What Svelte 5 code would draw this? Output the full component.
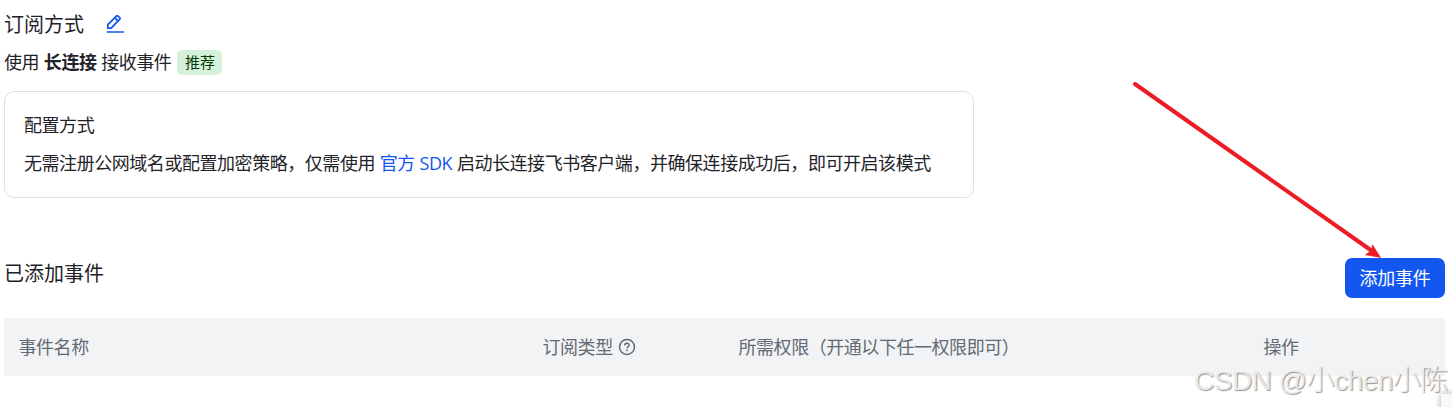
<script>
  const columns = [
    { label: '事件名称' },
    { label: '订阅类型', help: true },
    { label: '所需权限（开通以下任一权限即可）' },
    { label: '操作' }
  ];
</script>

<main>
  <header class="title">
    <h2>订阅方式</h2>
    <svg class="edit" width="20" height="20" viewBox="0 0 20 20" fill="none" stroke="#1456f0" stroke-width="1.8" stroke-linejoin="round" stroke-linecap="round">
      <path d="M2.800 14.200v-3.500l8.800-8.800q.6-.5 1.200 0l2 2q.5.6 0 1.200L6.200 14.200Z" />
      <path d="M10.400 4.400l2.400 2.400" />
      <path d="M2.400 17.900h15.900" stroke-width="1.5" />
    </svg>
  </header>

  <p class="mode"><span>使用 <b>长连接</b> 接收事件</span><span class="tag">推荐</span></p>

  <section class="card">
    <p>配置方式</p>
    <p>无需注册公网域名或配置加密策略，仅需使用 <a href="#sdk">官方 SDK</a> 启动长连接飞书客户端，并确保连接成功后，即可开启该模式</p>
  </section>

  <section class="events">
    <h2>已添加事件</h2>
    <button>添加事件</button>
  </section>

  <div class="table-head">
    {#each columns as col}
      <div class="cell">
        <span>{col.label}</span>
        {#if col.help}
          <svg width="18" height="18" viewBox="0 0 18 18" fill="none" stroke="#646a73" stroke-width="1.5">
            <circle cx="9" cy="9" r="7.500" />
            <path d="M6.800 7.400C6.800 4.500 11.200 4.600 11.200 7.200C11.200 8.800 9 8.700 9 10.600" />
            <path d="M9 11.600v1.600" />
          </svg>
        {/if}
      </div>
    {/each}
  </div>

  <svg class="arrow" width="260" height="190" viewBox="1130 75 260 190">
    <path d="M1135 84L1372 251" stroke="#ed1c24" stroke-width="4" stroke-linecap="round" />
    <path d="M1380.500 257.500L1372.500 244.800L1371.500 250.500L1365.500 254.800Z" fill="#ed1c24" stroke="#ed1c24" stroke-width=".6" />
  </svg>
  <div class="corner"></div>
  <div class="watermark">CSDN @小chen小陈</div>
</main>

<style>
  :global(body) { background: #fff; }
  main {
    position: relative;
    box-sizing: border-box;
    width: 1452px;
    height: 407px;
    padding: 10px 7px 0 4px;
    overflow: hidden;
    color: #1f2329;
    font-family: "Open Sans", "Noto Sans CJK SC", sans-serif;
    font-size: 18px;
    letter-spacing: -.45px;
    word-spacing: .5px;
    line-height: 28px;
  }
  h2, p { margin: 0; font-weight: 400; }
  h2 { font-size: 20px; line-height: 30px; letter-spacing: 0; }
  .title { display: flex; align-items: center; height: 28px; gap: 21px; }
  .title h2 { padding-top: 2px; }
  .mode { display: flex; align-items: center; gap: 6px; height: 28px; margin-top: 10px; }
  b { font-weight: 700; }
  .tag {
    box-sizing: border-box;
    width: 45px;
    height: 25px;
    border-radius: 5px;
    background: #d5f1dc;
    color: #043b00;
    font-size: 15px;
    letter-spacing: 0;
    line-height: 24px;
    text-align: center;
  }
  .card {
    box-sizing: border-box;
    width: 970px;
    height: 107px;
    margin-top: 15px;
    padding: 19px;
    border: 1px solid #dee0e3;
    border-radius: 10px;
    white-space: nowrap;
  }
  .card p + p { margin-top: 10px; }
  a { color: #1456f0; text-decoration: none; }
  .events {
    display: flex;
    justify-content: space-between;
    height: 40px;
    margin-top: 60px;
  }
  .events h2 { padding-top: 1px; }
  button {
    width: 100px;
    height: 40px;
    padding: 0;
    border: 0;
    border-radius: 7px;
    background: #1456f0;
    color: #fff;
    font: inherit;
    letter-spacing: -.3px;
  }
  .table-head {
    display: grid;
    grid-template-columns: 524px 196px 525px 1fr;
    height: 58px;
    margin-top: 20px;
    background: #f1f3f5;
    color: #646a73;
  }
  .cell { display: flex; align-items: center; gap: 5px; padding-left: 14.500px; white-space: nowrap; }
  .cell span { margin-top: -1px; }
  .arrow { position: absolute; left: 1130px; top: 75px; }
  .corner {
    position: absolute;
    left: 1441px;
    top: 394px;
    width: 20px;
    height: 20px;
    background: #f8f8f8;
    box-shadow: 0 0 7px rgba(0, 0, 0, .35);
  }
  .watermark {
    position: absolute;
    left: 1194px;
    top: 362px;
    color: rgba(240, 240, 240, .9);
    font-family: "Liberation Sans", "Noto Sans CJK SC", sans-serif;
    font-size: 28px;
    font-weight: 300;
    letter-spacing: -.5px;
    word-spacing: 0;
    line-height: 38px;
    white-space: nowrap;
    text-shadow: 1px 1px 1px rgba(80, 80, 80, .6);
  }
</style>
